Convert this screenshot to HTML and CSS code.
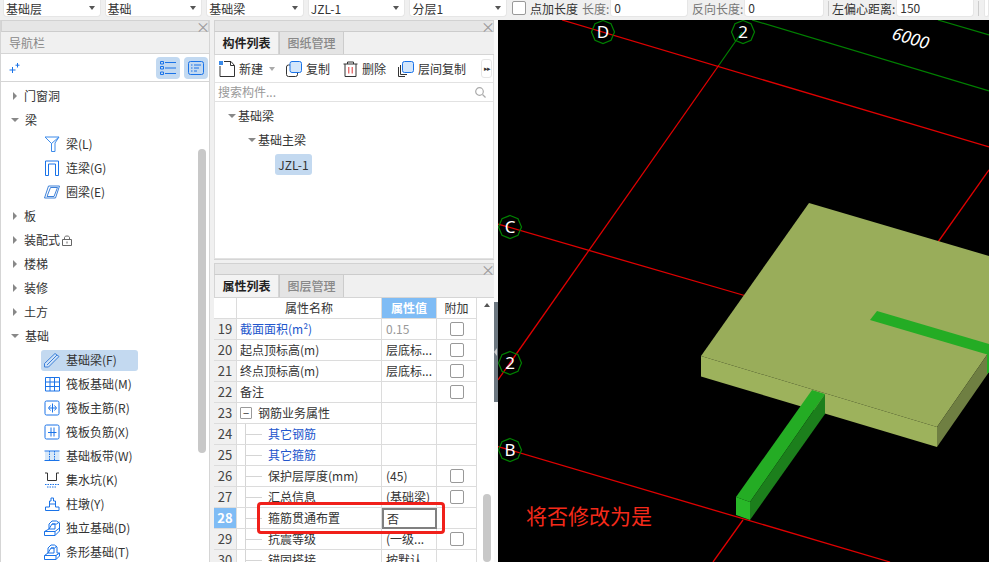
FILE: index.html
```html
<!DOCTYPE html>
<html lang="zh">
<head>
<meta charset="utf-8">
<title>属性列表</title>
<link rel="stylesheet" href="styles.css">
</head>
<body>
<div class="app">
  <header class="topbar">
    <div class="drop w98">基础层<i class="caret"></i></div>
    <div class="drop w98">基础<i class="caret"></i></div>
    <div class="drop w98">基础梁<i class="caret"></i></div>
    <div class="drop w98">JZL-1<i class="caret"></i></div>
    <div class="drop w98">分层1<i class="caret"></i></div>
    <span class="check top-check"></span>
    <span class="lbl">点加长度</span>
    <span class="lbl muted l3">长度:</span>
    <div class="field w78">0</div>
    <span class="lbl muted l3">反向长度:</span>
    <div class="field w80">0</div>
    <span class="vsep"></span>
    <span class="lbl tight">左偏心距离:</span>
    <div class="field w78">150</div>
    <span class="vsep"></span>
    <div class="field grow"></div>
  </header>

  <main class="main">
    <aside class="nav">
      <div class="strip"><span class="close">×</span></div>
      <div class="nav-title">导航栏</div>
      <div class="nav-tools">
        <svg class="spark" width="12" height="12" viewBox="0 0 12 12"><path d="M3.500 5V11M.5 8H6.500M8.500 1V5.500M6.500 3.200H10.500" fill="none" stroke="#1a73e8" stroke-width="1"/></svg>
        <span class="tool-spacer"></span>
        <span class="tbtn"><svg width="16" height="14" viewBox="0 0 16 14"><path d="M5 1.500H16M5 7H16M5 12.500H16" stroke="#1a73e8" fill="none"/><path d="M.5.500h3v2.500h-3zM.5 5.500h3v2.500h-3zM.5 11h3v2.500h-3z" stroke="#1a73e8" fill="none"/></svg></span>
        <span class="tbtn"><svg width="16" height="14" viewBox="0 0 16 14"><rect x=".5" y=".5" width="15" height="13" rx="2" stroke="#1a73e8" fill="none"/><path d="M3 4H4.500M6 4H13M3 7H4.500M6 7H11M3 10H4.500M6 10H9" stroke="#1a73e8" fill="none"/></svg></span>
      </div>
      <div class="nav-body">
        <div class="tree">
          <div class="sec"><i class="tri-r"></i>门窗洞</div>
          <div class="sec"><i class="tri-d"></i>梁</div>
          <div class="item"><svg class="ico" viewBox="0 0 16 16"><path d="M1 1H15L11 7V15.500H7.500V7.500ZM1 1L7.500 7.500M15 1L7.500 7.500" fill="none" stroke="#3d8bea"/></svg>梁(L)</div>
          <div class="item"><svg class="ico" viewBox="0 0 16 16"><path d="M1.500 15.500V1H14.500V15.500H11.500V4H4.500V15.500Z" fill="none" stroke="#1a73e8"/></svg>连梁(G)</div>
          <div class="item"><svg class="ico" viewBox="0 0 16 16"><path d="M4.500 2H15.500L11.500 14H.5ZM6.500 3.500H13.500L10 12.500H3Z" fill="none" stroke="#3d80d8"/></svg>圈梁(E)</div>
          <div class="sec"><i class="tri-r"></i>板</div>
          <div class="sec"><i class="tri-r"></i>装配式<svg class="lock" width="10" height="11" viewBox="0 0 10 11"><path d="M.5 4.500H9.500V10.500H.5ZM2.500 4.500V2.500C2.500.5 7.500.5 7.500 2.500V4.500" fill="none" stroke="#666"/><path d="M5 6.500V8.500" stroke="#666"/></svg></div>
          <div class="sec"><i class="tri-r"></i>楼梯</div>
          <div class="sec"><i class="tri-r"></i>装修</div>
          <div class="sec"><i class="tri-r"></i>土方</div>
          <div class="sec"><i class="tri-d"></i>基础</div>
          <div class="item"><span class="hl"><svg class="ico" viewBox="0 0 16 16"><path d="M.5 11.500L11 1.500L15 4.500L4.500 15H.5ZM3 13L13 3" fill="#cfe2f7" stroke="#3d80d8"/></svg>基础梁(F)</span></div>
          <div class="item"><svg class="ico" viewBox="0 0 16 16"><path d="M1.500 1.500H15.500V15H1.500ZM1.500 6H15.500M1.500 10.500H15.500M6 1.500V15M10.500 1.500V15" fill="none" stroke="#1a73e8"/></svg>筏板基础(M)</div>
          <div class="item"><svg class="ico" viewBox="0 0 16 16"><rect x="1" y="1" width="14" height="14" rx="1.500" fill="none" stroke="#1a73e8"/><path d="M8.500 3.500V12.500M5 8H12M6.500 5.500L4.500 8L6.500 10.500M10.500 5.500L12.500 8L10.500 10.500" fill="none" stroke="#1a73e8"/></svg>筏板主筋(R)</div>
          <div class="item"><svg class="ico" viewBox="0 0 16 16"><rect x="1" y="1" width="14" height="14" rx="1.500" fill="none" stroke="#1a73e8"/><path d="M7 3.500V12.500M10 3.500V12.500M4 8.500H12.500" fill="none" stroke="#1a73e8"/></svg>筏板负筋(X)</div>
          <div class="item"><svg class="ico" viewBox="0 0 16 16"><path d="M1 3.500H15.500V12H1Z" fill="#d8e8f8"/><path d="M.5 3H15.500M.5 12.500H15.500" stroke="#1a73e8" fill="none"/><path d="M5.500 3V12.500M10.500 3V12.500" stroke="#1a73e8" stroke-dasharray="1.500 1" fill="none"/></svg>基础板带(W)</div>
          <div class="item"><svg class="ico" viewBox="0 0 16 16"><path d="M1 1H3.500V8.500H12.500V1H15" fill="none" stroke="#333"/><path d="M1 12.500H15M3 15H13" stroke="#1a73e8" stroke-dasharray="1.500 1" fill="none"/></svg>集水坑(K)</div>
          <div class="item"><svg class="ico" viewBox="0 0 16 16"><path d="M1.500 14.500H15V11H11.500V5H9.500V2H7V5H5.500V11H1.500Z" fill="none" stroke="#1a73e8"/><path d="M5.500 8H11.500" stroke="#1a73e8"/></svg>柱墩(Y)</div>
          <div class="item"><svg class="ico" viewBox="0 0 16 16"><path d="M.5 15.500V11.500L5 9V4L8 1H12.500L15.500 3V11L11 15.500ZM.5 11.500H11V15.500M11 11.500L15.500 8M5 9H11V4H8ZM8 4H12.500L15.500 2" fill="none" stroke="#1a73e8"/></svg>独立基础(D)</div>
          <div class="item"><svg class="ico" viewBox="0 0 16 16"><path d="M.5 15.500V11.500L4 9V4L7 1H10.500L13 3V9H15.500V12L12 15.500ZM.5 11.500H12V15.500M4 9H10V4H7ZM7 4H10.500L13 2M12 11.500L15.500 9" fill="none" stroke="#1a73e8"/></svg>条形基础(T)</div>
        </div>
        <div class="nav-scroll"><span class="nav-thumb"></span></div>
      </div>
    </aside>

    <section class="mid">
      <div class="panel list-panel">
        <div class="strip"><span class="close">×</span></div>
        <div class="tabs"><span class="tab on">构件列表</span><span class="tab">图纸管理</span></div>
        <div class="actions">
          <svg class="aico" viewBox="0 0 16 16"><path d="M1 5V15.500H15.500V4.500L12 .5H5" fill="none" stroke="#333"/><path d="M11.500.5V4.500H15.500" fill="none" stroke="#333"/><rect x="0" y="0" width="4" height="4" fill="#3a8bea"/></svg><span class="atext">新建</span><i class="caret light"></i>
          <svg class="aico a2" viewBox="0 0 16 16"><rect x=".5" y="4" width="11" height="11.500" rx="2" fill="none" stroke="#333"/><rect x="4" y=".5" width="11.500" height="11" rx="2" fill="#d3e6fb" stroke="#1a73e8"/></svg><span class="atext">复制</span>
          <svg class="aico a3" viewBox="0 0 16 16"><path d="M.5 3H14.500M4.500 3V1H10.500V3M2 3V15.500H13V3" fill="none" stroke="#333"/><path d="M5.800 6V12.500M9.200 6V12.500" stroke="#d33" fill="none"/></svg><span class="atext">删除</span>
          <svg class="aico a4" viewBox="0 0 16 16"><path d="M2.500 4V13.500H9M.5 6V15.500H7" fill="none" stroke="#333"/><rect x="4.500" y=".5" width="11" height="11" rx="2" fill="#d3e6fb" stroke="#1a73e8"/></svg><span class="atext">层间复制</span>
          <span class="more">▸▸</span>
        </div>
        <div class="search"><span>搜索构件...</span><svg width="11" height="11" viewBox="0 0 11 11"><circle cx="4.500" cy="4.500" r="3.800" fill="none" stroke="#aaa" stroke-width="1.200"/><path d="M7.500 7.500L10.500 10.500" stroke="#aaa" stroke-width="1.200"/></svg></div>
        <div class="ctree">
          <div class="cnode n1"><i class="tri-d"></i>基础梁</div>
          <div class="cnode n2"><i class="tri-d"></i>基础主梁</div>
          <div class="cnode n3"><span class="chip">JZL-1</span></div>
        </div>
      </div>

      <div class="panel prop-panel">
        <div class="strip"><span class="close">×</span></div>
        <div class="tabs"><span class="tab on">属性列表</span><span class="tab">图层管理</span></div>
        <div class="prop-body">
          <div class="table">
            <div class="row head"><span class="num"></span><span class="name center">属性名称</span><span class="val active">属性值</span><span class="add center">附加</span></div>
            <div class="row"><span class="num">19</span><span class="name link">截面面积(m²)</span><span class="val gray">0.15</span><span class="add"><i class="check"></i></span></div>
            <div class="row"><span class="num">20</span><span class="name">起点顶标高(m)</span><span class="val">层底标...</span><span class="add"><i class="check"></i></span></div>
            <div class="row"><span class="num">21</span><span class="name">终点顶标高(m)</span><span class="val">层底标...</span><span class="add"><i class="check"></i></span></div>
            <div class="row"><span class="num">22</span><span class="name">备注</span><span class="val"></span><span class="add"><i class="check"></i></span></div>
            <div class="row"><span class="num">23</span><span class="name group"><b class="minus">−</b>钢筋业务属性</span><span class="val"></span><span class="add"></span></div>
            <div class="row"><span class="num">24</span><span class="name leaf link">其它钢筋</span><span class="val"></span><span class="add"></span></div>
            <div class="row"><span class="num">25</span><span class="name leaf link">其它箍筋</span><span class="val"></span><span class="add"></span></div>
            <div class="row"><span class="num">26</span><span class="name leaf">保护层厚度(mm)</span><span class="val">(45)</span><span class="add"><i class="check"></i></span></div>
            <div class="row"><span class="num">27</span><span class="name leaf">汇总信息</span><span class="val">(基础梁)</span><span class="add"><i class="check"></i></span></div>
            <div class="row"><span class="num sel">28</span><span class="name leaf">箍筋贯通布置</span><span class="val editing">否</span><span class="add"></span></div>
            <div class="row"><span class="num">29</span><span class="name leaf">抗震等级</span><span class="val">(一级...</span><span class="add"><i class="check"></i></span></div>
            <div class="row"><span class="num">30</span><span class="name leaf">锚固搭接</span><span class="val">按默认...</span><span class="add"></span></div>
          </div>
          <div class="vscroll"><span class="up"></span><span class="thumb"></span></div>
          <div class="redbox"></div>
        </div>
      </div>
    </section>

    <div class="splitter"><span class="grip"><i></i></span></div>

    <div class="view">
      <svg class="scene" viewBox="498 20 491 542" width="491" height="542">
        <g fill="none" stroke="#e00000" stroke-width="1.300">
          <path d="M562 20L989 147"/>
          <path d="M719 65L498 380"/>
          <path d="M498 224L760 300"/>
          <path d="M938 242L989 170"/>
          <path d="M498 446.500L890 562"/>
          <path d="M743 520L713 562"/>
        </g>
        <g fill="none" stroke="#008000" stroke-width="1.200">
          <path d="M719 65L742 32"/>
          <path d="M752 20L989 91"/>
          <path d="M938 20L989 35"/>
          <polygon class="oct" points="603,20.500 611,23.800 614.500,32 611,40.200 603,43.500 595,40.200 591.500,32 595,23.800"/>
          <polygon points="743,20.500 751,23.800 754.500,32 751,40.200 743,43.500 735,40.200 731.500,32 735,23.800"/>
          <polygon points="510,215.500 518,218.800 521.500,227 518,235.200 510,238.500 502,235.200 498.500,227 502,218.800"/>
          <polygon points="510,351.500 518,354.800 521.500,363 518,371.200 510,374.500 502,371.200 498.500,363 502,354.800"/>
          <polygon points="510,438.500 518,441.800 521.500,450 518,458.200 510,461.500 502,458.200 498.500,450 502,441.800"/>
        </g>
        <polygon points="809,203 989,256 989,352 937,427 701,356" fill="#99ad5a"/>
        <polygon points="701,356 937,427 937,447 701,376.500" fill="#9db25c"/>
        <polygon points="937,427 989,352 989,372 937,447" fill="#6f7f42"/>
        <polygon points="877,311 989,344 989,355 870,320" fill="#24ac24"/>
        <polygon points="987,355 989,352 989,372 987,374" fill="#24ac24"/>
        <polygon points="812,390 825,394 750,502 736,497" fill="#24ac24"/>
        <polygon points="825,394 825,414 750,520 750,502" fill="#1c7f1c"/>
        <polygon points="736,497 750,502 750,520 736,515" fill="#28b828"/>
        <g class="axis">
          <text x="603" y="38">D</text>
          <text x="743" y="38">2</text>
          <text x="510" y="233">C</text>
          <text x="510" y="369">2</text>
          <text x="510" y="456">B</text>
        </g>
        <text class="dim" transform="translate(909 44) rotate(16.500)">6000</text>
        <text class="note" x="526" y="524">将否修改为是</text>
      </svg>
    </div>
  </main>
</div>
</body>
</html>
```

FILE: styles.css
```css
* { box-sizing: border-box; }
html, body { margin: 0; padding: 0; height: 100%; overflow: hidden; }
body {
  background: #f0f0f0;
  color: #333;
  font: 12px/1 "Noto Sans CJK SC", "Noto Sans", sans-serif;
}
i, b { font-style: normal; font-weight: normal; }
.app { width: 989px; height: 562px; display: flex; flex-direction: column; overflow: hidden; }

/* top bar */
.topbar { height: 20px; flex: none; display: flex; align-items: flex-start; padding-left: 3px; gap: 4px; background: #f0f0f0; }
.drop, .field {
  height: 17px; background: #fff; border: 1px solid #e6e6e6; border-top: 0;
  border-radius: 0 0 4px 4px; line-height: 15px; padding-left: 3px; font-size: 12px;
}
.drop { display: flex; justify-content: space-between; align-items: center; padding-left: 2px; padding-right: 5px; }
.w98 { width: 98px; }
.w78 { width: 78px; margin-left: -3px; }
.w80 { width: 80px; margin-left: -3px; }
.grow { flex: 1; margin-left: 1px; }
.caret { width: 0; height: 0; border: 3.5px solid transparent; border-top: 4px solid #555; border-bottom: 0; display: inline-block; }
.caret.light { border-top-color: #aaa; margin: 0 12px 0 6px; }
.check { display: block; width: 14px; height: 14px; background: #fff; border: 1px solid #999; border-radius: 2px; }
.top-check { margin: 1px 0 0 1px; }
.lbl { line-height: 17px; white-space: nowrap; }
.lbl.muted { color: #777; }
.lbl.tight { margin-left: -1px; }
.l3 { margin-left: 0; }
.vsep { width: 1px; height: 15px; background: #ccc; margin: 1px 0 0 0; }

/* main */
.main { flex: 1; min-height: 0; display: flex; }
.strip { height: 12px; background: #e6e6e6; border: 1px solid #d2d2d2; border-bottom-color: #ccc; display: flex; justify-content: flex-end; align-items: center; padding-right: 2px; flex: none; }
.close { color: #999; font-size: 14px; line-height: 10px; width: 10px; text-align: center; }

/* nav */
.nav { width: 210px; flex: none; display: flex; flex-direction: column; background: #fff; border-right: 1px solid #d5d5d5; border-left: 1px solid #d5d5d5; }
.nav-title { height: 22px; background: #f0f0f0; color: #888; font-size: 12px; line-height: 21px; padding-left: 8px; border-bottom: 1px solid #d5d5d5; flex: none; }
.nav-tools { height: 28px; flex: none; display: flex; align-items: center; gap: 4px; padding-right: 1px; border-bottom: 1px solid #d5d5d5; }
.spark { margin-left: 8px; }
.tool-spacer { flex: 1; }
.tbtn { width: 24px; height: 22px; background: #c2d9f1; border-radius: 4px; display: flex; align-items: center; justify-content: center; }
.nav-body { flex: 1; min-height: 0; display: flex; overflow: hidden; }
.tree { flex: 1; padding-top: 2px; }
.sec, .item { height: 24px; display: flex; align-items: center; white-space: nowrap; }
.sec { padding-left: 12px; }
.item { padding-left: 43px; }
.tri-r { width: 0; height: 0; border: 4px solid transparent; border-left: 4px solid #888; border-right: 0; margin-right: 7px; flex: none; }
.tri-d { width: 0; height: 0; border: 4px solid transparent; border-top: 4px solid #888; border-bottom: 0; margin: 0 6px 0 -2px; flex: none; }
.ico { width: 16px; height: 16px; margin-right: 6px; flex: none; }
.lock { margin-left: 2px; }
.hl { display: flex; align-items: center; width: 97px; height: 21px; background: #c3d9f0; border-radius: 3px; margin-left: -3px; padding-left: 3px; }
.nav-scroll { width: 11px; flex: none; padding-top: 67px; }
.nav-thumb { display: block; width: 8px; height: 304px; background: #c8c8c8; border-radius: 4px; }

/* middle */
.mid { width: 280px; flex: none; margin-left: 4px; display: flex; flex-direction: column; gap: 3px; }
.panel { background: #fff; display: flex; flex-direction: column; }
.list-panel { height: 240px; border-bottom: 1px solid #d5d5d5; }
.prop-panel { flex: 1; min-height: 0; }
.tabs { height: 23px; flex: none; display: flex; background: #f0f0f0; border-bottom: 1px solid #d5d5d5; }
.tab { width: 65px; text-align: center; line-height: 22px; color: #888; background: #e4e4e4; border: 1px solid #ccc; border-top: 0; border-bottom: 0; font-weight: 500; }
.tab.on { background: #f3f3f3; color: #222; border-color: #d5d5d5; font-weight: 700; border-left: 1px solid #d5d5d5; }
.actions { height: 28px; flex: none; display: flex; align-items: center; padding-left: 4px; border: 1px solid #e2e2e2; border-top: 0; }
.aico { width: 16px; height: 16px; flex: none; margin-right: 4px; }
.atext { white-space: nowrap; }
.a2 { margin-left: -1px; }
.a3 { margin-left: 13px; margin-right: 3px; }
.a4 { margin-left: 12px; }
.more { margin-left: auto; width: 11px; height: 19px; border: 1px solid #e6e6e6; border-radius: 3px; margin-right: 1px; font-size: 7px; line-height: 17px; letter-spacing: -1px; color: #333; text-align: center; overflow: hidden; }
.search { height: 19px; flex: none; display: flex; align-items: center; justify-content: space-between; padding: 0 7px 0 3px; color: #999; border: 1px solid #e2e2e2; border-top: 0; }
.ctree { flex: 1; border: 1px solid #e2e2e2; border-top: 0; padding-top: 2px; }
.cnode { height: 24px; display: flex; align-items: center; white-space: nowrap; }
.cnode .tri-d { margin-right: 2px; }
.n1 { padding-left: 15px; }
.n2 { padding-left: 35px; }
.n3 { padding-left: 60px; }
.chip { display: block; width: 37px; height: 21px; line-height: 21px; text-align: center; background: #c3d9f0; border-radius: 3px; }

/* property table */
.prop-body { flex: 1; min-height: 0; display: flex; position: relative; overflow: hidden; }
.table { width: 263px; flex: none; }
.row { display: grid; grid-template-columns: 23px 145px 55px 40px; height: 21px; line-height: 20px; }
.row > span { border-right: 1px solid #dcdcdc; border-bottom: 1px solid #dcdcdc; white-space: nowrap; overflow: hidden; }
.num { background: #f0f0f0; text-align: center; font-size: 13px; color: #444; }
.num.sel { background: #7fbcf5; color: #fff; font-weight: 700; }
.head .num { background: #fff; }
.name { padding-left: 3px; }
.center { text-align: center; padding-left: 0; }
.link { color: #2255cc; }
.val { padding-left: 4px; }
.val.active { background: #7fbcf5; color: #fff; font-weight: 700; text-align: center; padding-left: 0; }
.gray { color: #999; }
.add { display: flex; align-items: center; justify-content: center; }
.group { display: flex; align-items: center; }
.minus { width: 12px; height: 12px; border: 1px solid #999; border-radius: 1px; margin-right: 6px; line-height: 10px; text-align: center; font-size: 11px; flex: none; }
.leaf {
  padding-left: 31px;
  background-image: linear-gradient(#d5d5d5, #d5d5d5), linear-gradient(#d5d5d5, #d5d5d5);
  background-repeat: no-repeat;
  background-size: 1px 100%, 16px 1px;
  background-position: 8px 0, 9px 10px;
}
.row > .editing { border: 2px solid #808080; padding-left: 3px; line-height: 17px; }
.vscroll { flex: 1; display: flex; flex-direction: column; align-items: center; padding-top: 5px; padding-left: 2px; background: #fff; }
.up { width: 0; height: 0; border: 3.500px solid transparent; border-bottom: 4px solid #555; border-top: 0; }
.thumb { display: block; width: 8px; height: 80px; background: #c8c8c8; border-radius: 4px; margin-top: 187px; }
.redbox { position: absolute; left: 43px; top: 204px; width: 188px; height: 32px; border: 3px solid #f0201a; border-radius: 4px; }

/* splitter and view */
.splitter { width: 4px; flex: none; background: #fafafa; padding-top: 282px; }
.grip { display: flex; align-items: center; width: 4px; height: 100px; background: #6c7780; }
.grip i { width: 0; height: 0; border: 4px solid transparent; border-right: 3px solid #ccc; border-left: 0; }
.view { flex: 1; min-width: 0; background: #000; overflow: hidden; }
.scene { display: block; }
.axis text { fill: #fff; font: 17px "Noto Sans", sans-serif; text-anchor: middle; }
.dim { fill: #fff; font: italic 17px "Noto Sans", sans-serif; text-anchor: middle; }
.note { fill: #f42a1a; font: 21px "Noto Sans CJK SC", sans-serif; }
```
